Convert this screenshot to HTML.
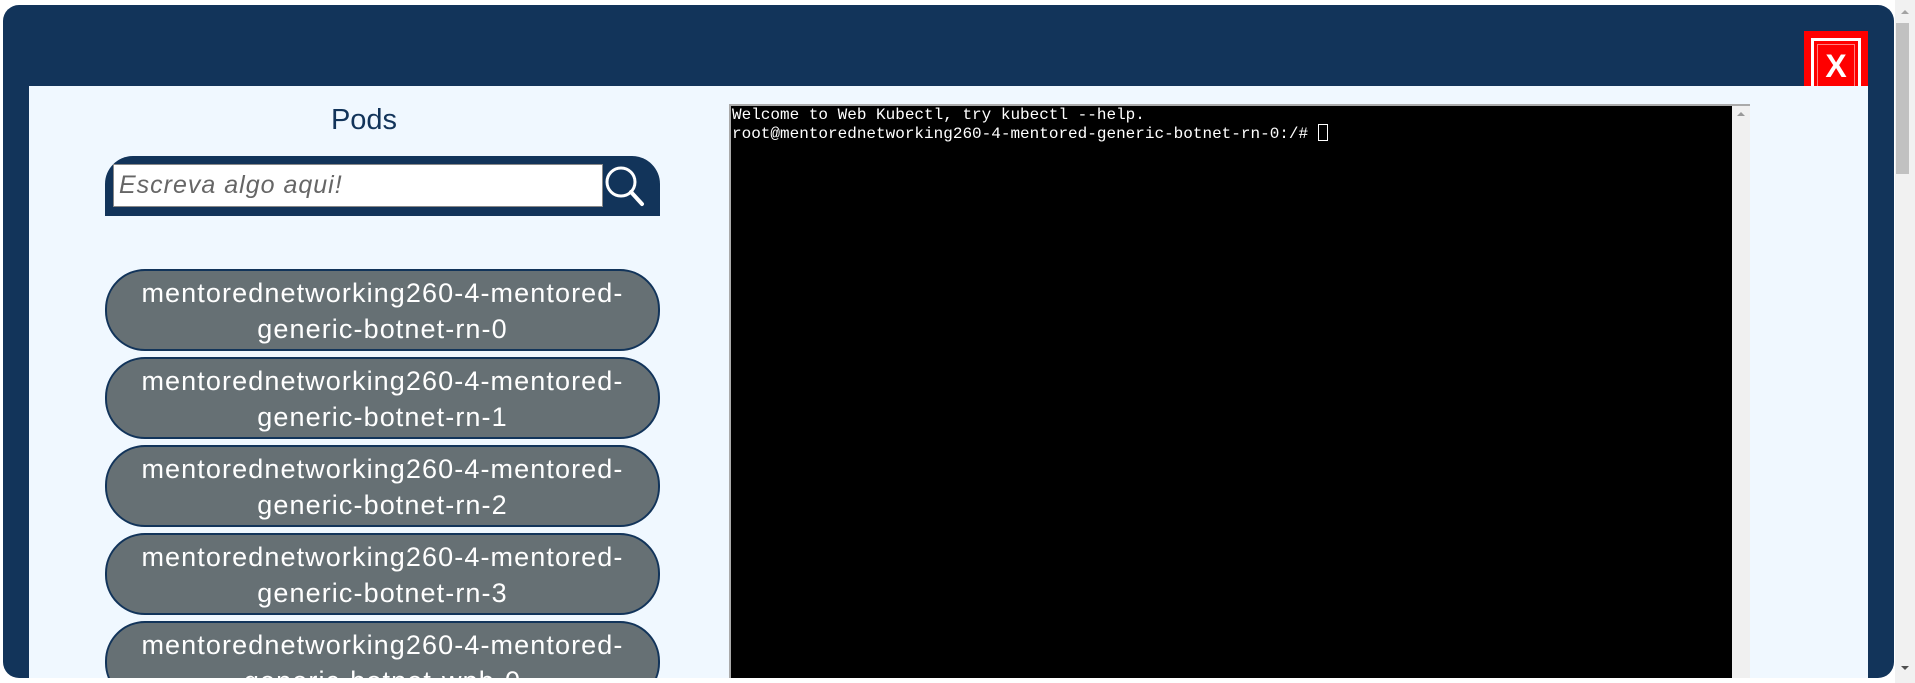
<!DOCTYPE html>
<html><head><meta charset="utf-8"><style>
html,body{margin:0;padding:0;width:1915px;height:683px;overflow:hidden;background:#fff;font-family:"Liberation Sans",sans-serif}
.modal{position:absolute;left:3px;top:5px;width:1891px;height:673px;background:#12345a;border-radius:16px;overflow:hidden}
.light{position:absolute;left:29px;top:86px;width:1839px;height:592px;background:#f0f8ff;overflow:hidden}
.close{position:absolute;left:1804px;top:31px;width:64px;height:55px;background:#ff0000}
.close .in{position:absolute;left:7px;top:7px;width:44px;height:48px;border:3px solid #fff;border-bottom:none;background:#ff0000}
.close .in div{position:absolute;left:3px;top:3px;right:3px;bottom:0;border:1px solid #ff8080;border-bottom:none;color:#fff;font-weight:bold;font-size:32px;text-align:center;line-height:42px}
.pods{position:absolute;left:264px;width:200px;top:104px;text-align:center;font-size:29px;color:#12345a}
.search{position:absolute;left:105px;top:156px;width:555px;height:60px;background:#12345a;border-radius:28px 28px 0 0}
.search .inp{position:absolute;left:8px;top:8px;background:#fff;border:1px solid #888;font-style:italic;font-size:25px;letter-spacing:1px;color:#666;line-height:41px;padding-left:5px;box-sizing:border-box;width:490px;height:43px}
.btn{position:absolute;left:105px;width:555px;height:82px;box-sizing:border-box;background:#667074;border:2px solid #12345a;border-radius:40px;color:#fff;font-size:27px;letter-spacing:1.1px;text-align:center;line-height:36px;padding-top:4px}
.term{position:absolute;left:729px;top:104px;width:1021px;height:600px;background:#000;border-top:2px solid #aaa;border-left:2px solid #aaa;box-sizing:border-box}
.term pre{margin:0;position:absolute;left:1px;top:1px;color:#fff;font-family:"Liberation Mono",monospace;font-size:16px;line-height:17px}
.cur{display:inline-block;width:8px;height:15px;border:1px solid #fff;vertical-align:-3px}
.tsb{position:absolute;right:0;top:0;width:18px;height:100%;background:#f0f0f0}
.psb{position:absolute;left:1895px;top:0;width:20px;height:683px;background:#f1f1f1}
.thumb{position:absolute;left:1px;top:23px;width:13px;height:151px;background:#c1c1c1}
.arr{position:absolute;width:0;height:0;border-left:4px solid transparent;border-right:4px solid transparent}
</style></head><body>
<div class="modal"></div>
<div class="close"><div class="in"><div>X</div></div></div>
<div class="light"></div>
<div class="pods">Pods</div>
<div class="search"><div class="inp">Escreva algo aqui!</div>
<svg style="position:absolute;left:497px;top:7px" width="46" height="46" viewBox="0 0 46 46"><circle cx="19" cy="19" r="14" fill="none" stroke="#fff" stroke-width="3"/><line x1="29" y1="29" x2="40" y2="41" stroke="#fff" stroke-width="4" stroke-linecap="round"/></svg></div>
<div class="btn" style="top:269px">mentorednetworking260-4-mentored-<br>generic-botnet-rn-0</div>
<div class="btn" style="top:357px">mentorednetworking260-4-mentored-<br>generic-botnet-rn-1</div>
<div class="btn" style="top:445px">mentorednetworking260-4-mentored-<br>generic-botnet-rn-2</div>
<div class="btn" style="top:533px">mentorednetworking260-4-mentored-<br>generic-botnet-rn-3</div>
<div style="position:absolute;left:0;top:0;width:1915px;height:678px;overflow:hidden"><div class="btn" style="top:621px">mentorednetworking260-4-mentored-<br>generic-botnet-wpb-0</div>
<div class="term"><pre>Welcome to Web Kubectl, try kubectl --help.
root@mentorednetworking260-4-mentored-generic-botnet-rn-0:/# <span class="cur"></span></pre><div class="tsb"><div class="arr" style="left:5px;top:6px;border-bottom:4px solid #999"></div></div></div></div>
<div style="position:absolute;left:0;top:678px;width:1895px;height:5px;background:#fff"></div>
<div class="psb"><div class="arr" style="left:6px;top:10px;border-bottom:4px solid #a3a3a3"></div><div class="thumb"></div><div class="arr" style="left:6px;top:666px;border-top:4px solid #505050"></div></div>
</body></html>
